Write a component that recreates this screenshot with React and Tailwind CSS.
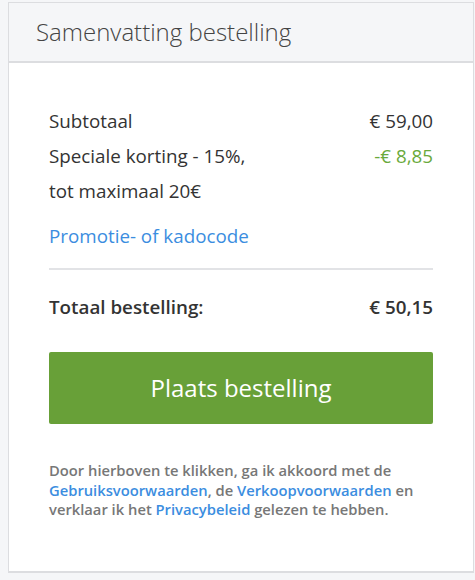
export default function App() {
  return (
    <div className="w-[475px] h-[580px] bg-[#f5f6f8] pt-[2px] pl-[8px]" style={{ fontFamily: '"Open Sans", sans-serif' }}>
      <div className="w-[466px] h-[571px] border border-[#dcdde0] border-b-2 bg-white flex flex-col">
        <div className="h-[60px] bg-[#f5f6f8] border-b-2 border-[#dcdde0] flex items-center pl-[27px]">
          <h2 className="text-[24px] font-light text-[#444] leading-none">Samenvatting bestelling</h2>
        </div>
        <div className="px-[40px] pt-[41px]">
          <div className="text-[18.8px] text-[#333] leading-[35px]">
            <div className="flex justify-between">
              <span>Subtotaal</span>
              <span>€ 59,00</span>
            </div>
            <div className="flex justify-between">
              <span>Speciale korting - 15%,<br />tot maximaal 20€</span>
              <span className="text-[#6aaa3c]">-€ 8,85</span>
            </div>
          </div>
          <div className="mt-[10px] text-[18.8px] leading-[35px] text-[#3b8de0]">Promotie- of kadocode</div>
          <div className="mt-[14px] h-[2px] bg-[#e2e3e6]" />
          <div className="mt-[20px] flex justify-between text-[18.8px] font-semibold text-[#333] leading-[35px]">
            <span>Totaal bestelling:</span>
            <span>€ 50,15</span>
          </div>
          <button className="mt-[27px] w-full h-[72px] rounded-[2px] bg-[#68a038] text-white text-[24px] leading-none">Plaats bestelling</button>
          <p className="mt-[37px] text-[14.75px] font-semibold text-[#777] leading-[19.5px]">
            Door hierboven te klikken, ga ik akkoord met de <span className="text-[#3b8de0]">Gebruiksvoorwaarden</span>, de <span className="text-[#3b8de0]">Verkoopvoorwaarden</span> en verklaar ik het <span className="text-[#3b8de0]">Privacybeleid</span> gelezen te hebben.
          </p>
        </div>
      </div>
    </div>
  );
}
